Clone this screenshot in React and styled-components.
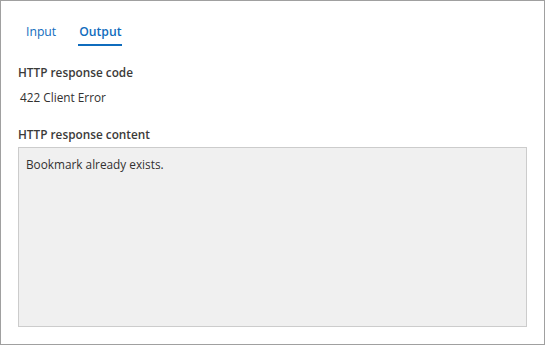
import React, { useState } from 'react';
import styled, { createGlobalStyle } from 'styled-components';

const GlobalStyle = createGlobalStyle`
  body {
    margin: 0;
    padding: 0;
    font-family: 'Open Sans', 'Noto Sans', sans-serif;
    background: #ffffff;
  }
`;

const Panel = styled.div`
  width: 545px;
  height: 345px;
  box-sizing: border-box;
  border: 1px solid #a0a0a0;
  padding: 0 17px 0 17px;
  display: flex;
  flex-direction: column;
`;

const TabBar = styled.div`
  display: flex;
  gap: 23px;
  padding: 0 0 0 8px;
  height: 46px;
`;

const Tab = styled.button`
  position: relative;
  background: none;
  border: none;
  padding: 17px 0 0 0;
  margin: 0;
  font-family: inherit;
  font-size: 12.2px;
  font-weight: ${({ active }) => (active ? 600 : 400)};
  color: #0f6cbd;
  cursor: pointer;
  align-self: flex-start;
  height: 45px;
  line-height: 18px;

  &::after {
    content: '';
    position: absolute;
    left: -1px;
    right: -1px;
    bottom: 0;
    height: 2px;
    background: ${({ active }) => (active ? '#0f6cbd' : 'transparent')};
  }
`;

const Label = styled.div`
  font-size: 11.8px;
  font-weight: 600;
  color: #3b3a39;
  line-height: 18px;
  margin-top: ${({ top }) => top}px;
`;

const Value = styled.div`
  font-size: 11.8px;
  color: #323130;
  line-height: 18px;
  padding-left: 2px;
  margin-top: 7px;
`;

const ContentBox = styled.div`
  margin-top: 4px;
  height: 180px;
  box-sizing: border-box;
  background: #f0f0f0;
  border: 1px solid #cccccc;
  padding: 7px 7px;
  font-size: 11.8px;
  color: #323130;
  line-height: 18px;
`;

const App = () => {
  const [tab, setTab] = useState('output');

  return (
    <>
      <GlobalStyle />
      <Panel>
        <TabBar>
          <Tab active={tab === 'input'} onClick={() => setTab('input')}>Input</Tab>
          <Tab active={tab === 'output'} onClick={() => setTab('output')}>Output</Tab>
        </TabBar>
        <Label top={16}>HTTP response code</Label>
        <Value>422 Client Error</Value>
        <Label top={19}>HTTP response content</Label>
        <ContentBox>Bookmark already exists.</ContentBox>
      </Panel>
    </>
  );
};

export default App;
